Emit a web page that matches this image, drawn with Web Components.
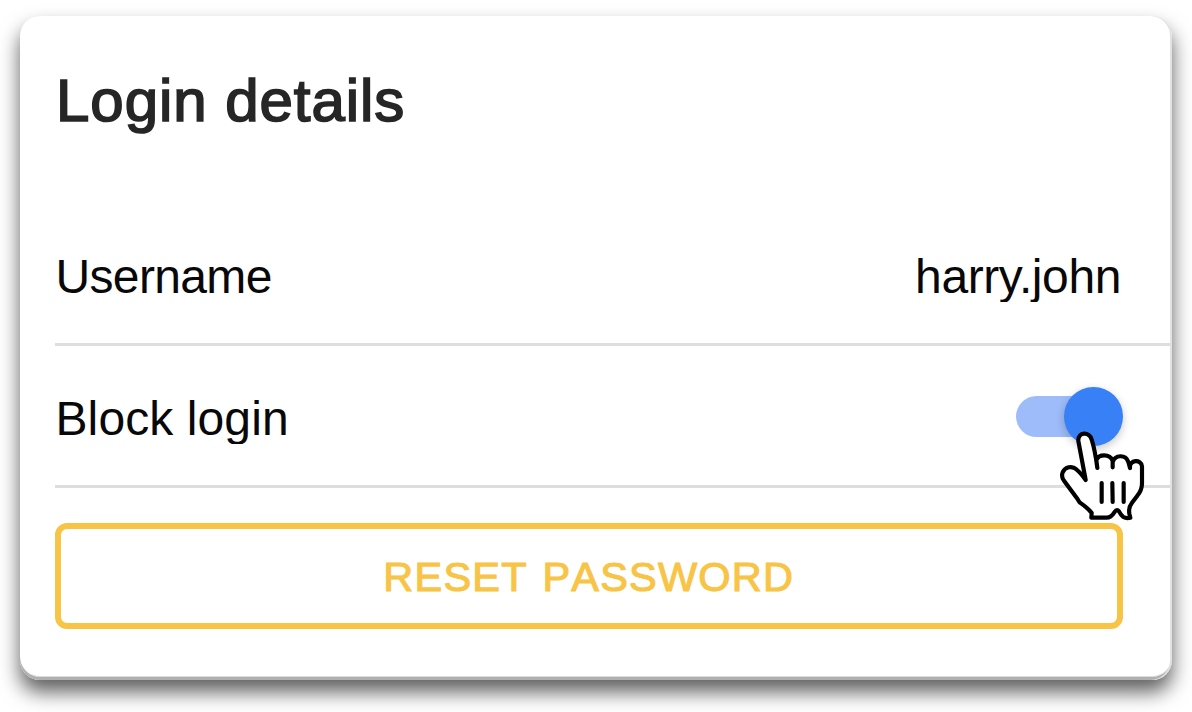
<!DOCTYPE html>
<html lang="en">
<head>
<meta charset="utf-8">
<title>Login details</title>
<style>
html,body{margin:0;height:100%;background:#fff;overflow:hidden}
body{padding:16px 20px 32px;box-sizing:border-box;font-family:"Liberation Sans",Arial,sans-serif;color:#080808}
</style>
</head>
<body>
<login-card>
  <card-title slot="title">Login details</card-title>
  <detail-row style="--ls:-.65px;--ls-end:-.4px">Username<span slot="end">harry.john</span></detail-row>
  <detail-row style="--ls:.1px">Block login<toggle-switch slot="end"></toggle-switch></detail-row>
  <outline-button>RESET PASSWORD</outline-button>
</login-card>
<script>
const define = (name, html) => customElements.define(name, class extends HTMLElement {
  constructor() {
    super();
    this.attachShadow({ mode: "open" }).innerHTML = html;
  }
});

define("login-card", `
<style>
:host{display:flex;flex-direction:column;box-sizing:border-box;width:1152px;height:664px;padding-left:35px;border-radius:20px;background:#fff;box-shadow:inset -2px 0 0 #e2e2e2,inset 0 -3px 0 #b0b0b0,inset 0 -4px 0 #dcdcdc,0 12px 20px rgba(0,0,0,.63)}
</style>
<slot name="title"></slot><slot></slot>`);

define("card-title", `
<style>
:host{display:block;box-sizing:border-box;height:188px;padding:50px 0 0 1px;font-size:60px;line-height:70px;letter-spacing:.95px;color:#262626;-webkit-text-stroke:1.7px #262626;white-space:nowrap}
</style>
<slot></slot>`);

define("detail-row", `
<style>
:host{display:flex;align-items:center;justify-content:space-between;box-sizing:border-box;height:142px;margin-right:2px;padding:1px 47px 0 0;border-bottom:3px solid #dedede;font-size:48px;line-height:56px;white-space:nowrap}
.label{padding:5px 0 0 .5px;letter-spacing:var(--ls);clip-path:inset(0 0 2.5px)}
.end{display:flex;letter-spacing:var(--ls-end)}
::slotted(span){padding:5px 2px 0 0;clip-path:inset(0 0 2.5px)}
</style>
<span class="label"><slot></slot></span><span class="end"><slot name="end"></slot></span>`);

define("toggle-switch", `
<style>
:host{display:flex;position:relative;align-items:center;justify-content:flex-end;width:107px;height:59px}
.track{flex:1;height:41px;margin-right:-38px;border-radius:21px;background:#9ebcfa}
.knob{position:relative;width:59.5px;height:59px;border-radius:50%;background:#3880f6;box-shadow:0 3px 8px rgba(0,0,0,.22)}
pointer-hand{position:absolute;left:42px;top:43px;z-index:2}
</style>
<span class="track"></span><span class="knob"></span><pointer-hand></pointer-hand>`);

define("pointer-hand", `
<style>
:host{display:block;width:88px;height:92px}
svg{display:block}
</style>
<svg width="88" height="92" viewBox="174 180 264 276" fill="#fff" stroke="#000" stroke-width="12.5" stroke-linecap="round" stroke-linejoin="round">
<path d="M257 330 L235 213 C233 184 269 184 275 209 Q285 240 292 294 L289 270 C296 252 329 250 338 272 V292 V276 C345 254 377 252 385 276 L390 294 C387 269 424 266 426 289 V340 Q426 361 412 377 L396 398 Q385 412 388 431 L391 443 Q379 446 370 441 Q362 434 357 424 Q350 416 343 427 Q333 443 320 443 H274 L275 429 Q267 417 240 398 Q236 394 232 386 L192 332 Q183 321 188 307 C195 291 216 286 229 298 Q241 307 257 330 Z"/>
<path fill="none" d="M305 339V396M337 339L338 396M371 339V396"/>
</svg>`);

define("outline-button", `
<style>
:host{display:flex;align-items:center;justify-content:center;box-sizing:border-box;width:1067.5px;height:106px;margin-top:35px;padding-top:1px;border:6px solid #f8c446;border-radius:12px;color:#f8c446;font-size:41.5px;line-height:48px;letter-spacing:1.2px;word-spacing:2px;font-kerning:none;-webkit-text-stroke:1.1px #f8c446;white-space:nowrap}
</style>
<slot></slot>`);
</script>
</body>
</html>
